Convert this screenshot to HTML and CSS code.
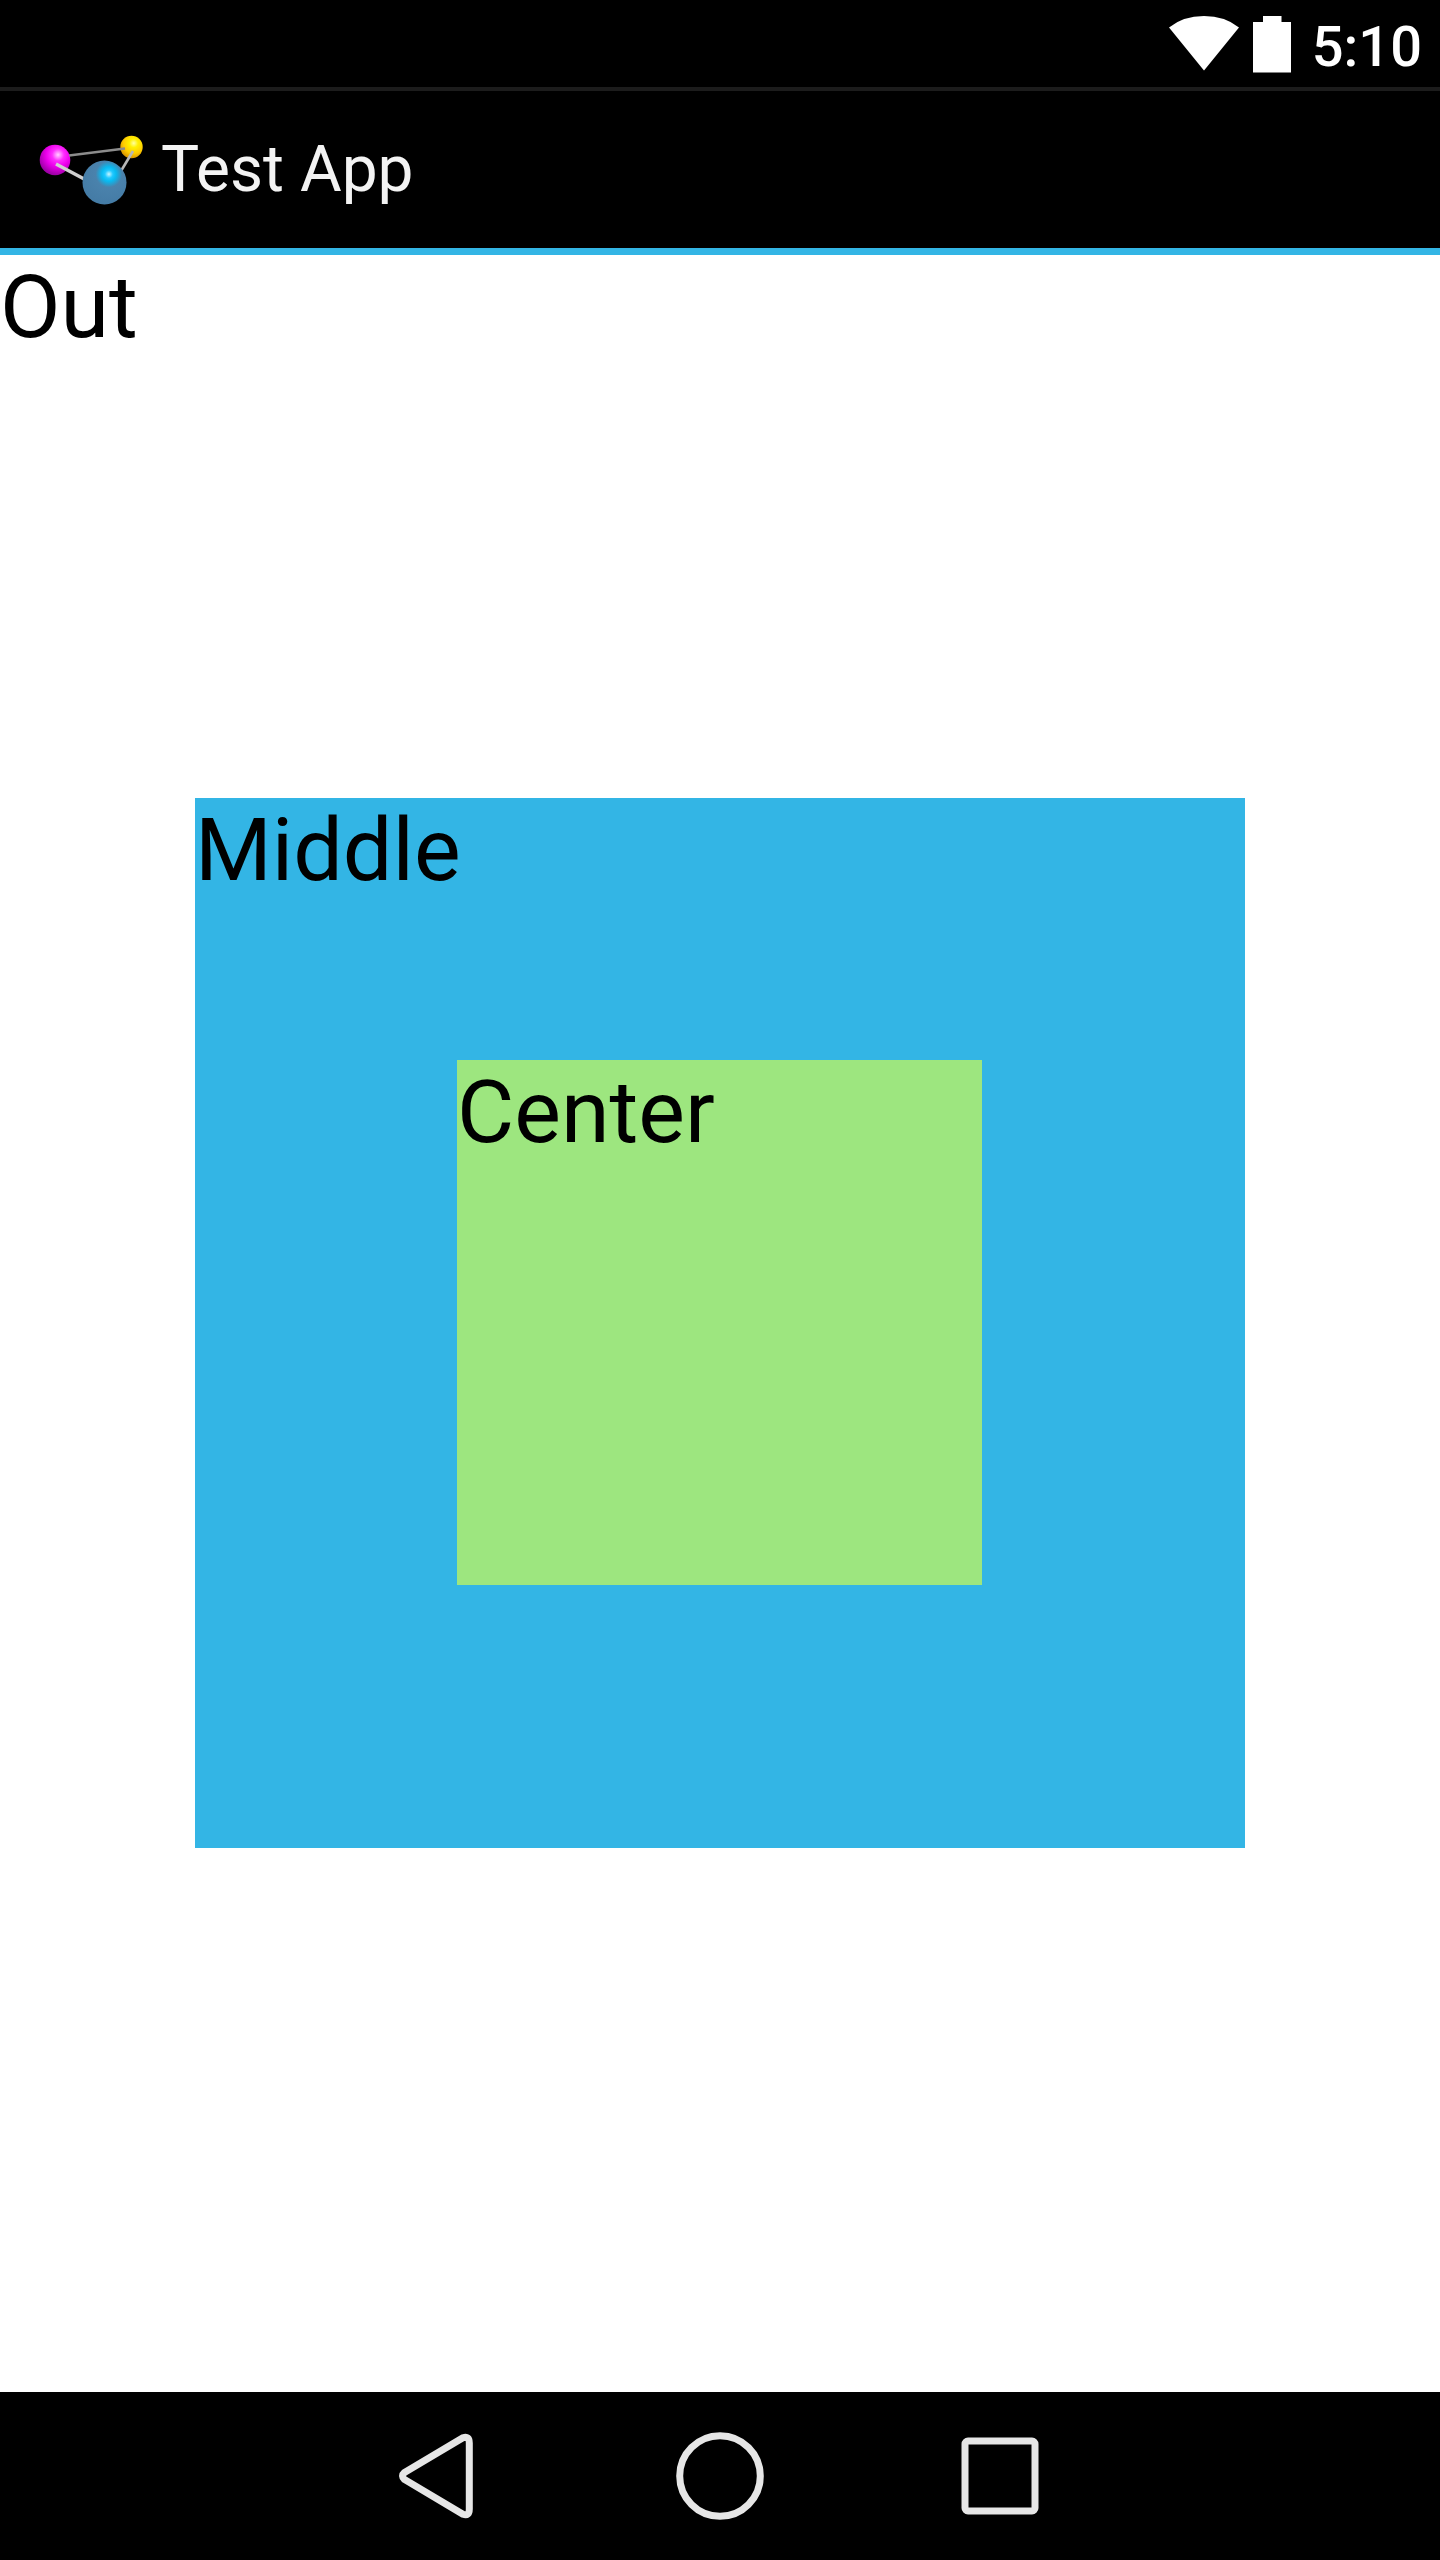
FILE: index.html
```html
<!DOCTYPE html>
<html lang="en">
<head>
<meta charset="utf-8">
<meta name="viewport" content="width=device-width, initial-scale=1">
<title>Test App</title>
<link rel="stylesheet" href="styles.css">
</head>
<body>
<div class="screen">
  <div class="status-bar">
    <svg class="wifi-icon" viewBox="0 0 70 64" aria-hidden="true">
      <path d="M0 12.500Q14 1 35 1T70 12.500L35 55.500Z" fill="#fff"/>
    </svg>
    <svg class="battery-icon" viewBox="0 0 38 64" aria-hidden="true">
      <path d="M10 1H28.500V7H38V57.500H0V7H10Z" fill="#fff"/>
    </svg>
    <time class="clock">5:10</time>
  </div>
  <header class="action-bar">
    <svg class="app-icon" viewBox="0 0 112 112" aria-hidden="true">
      <defs>
        <radialGradient id="magenta" cx="0.6" cy="0.33" r="0.65">
          <stop offset="0" stop-color="#ffd0ff"/>
          <stop offset="0.3" stop-color="#ff2cff"/>
          <stop offset="0.6" stop-color="#ec00ec"/>
          <stop offset="1" stop-color="#a000a8"/>
        </radialGradient>
        <radialGradient id="yellow" cx="0.6" cy="0.33" r="0.65">
          <stop offset="0" stop-color="#ffffa0"/>
          <stop offset="0.3" stop-color="#fff000"/>
          <stop offset="0.7" stop-color="#ffcc00"/>
          <stop offset="1" stop-color="#dd9c00"/>
        </radialGradient>
        <radialGradient id="blue" cx="0.6" cy="0.31" r="0.65">
          <stop offset="0" stop-color="#c8f6ff"/>
          <stop offset="0.14" stop-color="#20c8ff"/>
          <stop offset="0.25" stop-color="#08baf0"/>
          <stop offset="0.46" stop-color="#4a82ac"/>
          <stop offset="1" stop-color="#457ca6"/>
        </radialGradient>
      </defs>
      <circle cx="19" cy="46" r="15.300" fill="url(#magenta)"/>
      <circle cx="95.500" cy="33" r="11.200" fill="url(#yellow)"/>
      <path d="M33 41.500L89 34.500" stroke="#8c8c8c" stroke-width="2.400"/>
      <path d="M97 37L82 62" stroke="#b8b8b8" stroke-width="2.600"/>
      <path d="M20 50L50 66" stroke="#d0d0d0" stroke-width="3.400"/>
      <circle cx="68.500" cy="68.500" r="22" fill="url(#blue)"/>
    </svg>
    <h1 class="title">Test App</h1>
  </header>
  <main class="outer">
    <span class="label outer-label">Out</span>
    <section class="middle">
      <span class="label">Middle</span>
      <div class="center">
        <span class="label">Center</span>
      </div>
    </section>
  </main>
  <nav class="nav-bar">
    <button class="nav-button" type="button" aria-label="Back">
      <svg class="nav-icon" viewBox="0 0 96 96" aria-hidden="true">
        <path d="M12.500 44.500L71 9.800Q77.300 7.500 77.300 15V81Q77.300 88.500 71 86.200L12.500 51.500Q8.500 48 12.500 44.500Z"/>
      </svg>
    </button>
    <button class="nav-button" type="button" aria-label="Home">
      <svg class="nav-icon" viewBox="0 0 96 96" aria-hidden="true">
        <circle cx="48" cy="48" r="40.300"/>
      </svg>
    </button>
    <button class="nav-button" type="button" aria-label="Recent apps">
      <svg class="nav-icon" viewBox="0 0 96 96" aria-hidden="true">
        <rect x="13" y="13" width="70" height="70" rx="3"/>
      </svg>
    </button>
  </nav>
</div>
</body>
</html>
```
FILE: styles.css
```css
*,
*::before,
*::after {
  box-sizing: border-box;
}

body {
  margin: 0;
  background: #fff;
  font-family: Roboto, sans-serif;
}

.screen {
  display: flex;
  flex-direction: column;
  min-height: 100vh;
}

.status-bar {
  display: flex;
  align-items: center;
  justify-content: flex-end;
  padding: 14px 18px 7px;
  background: #000;
  color: #fff;
}

.wifi-icon {
  width: 70px;
  height: 64px;
  margin-right: 14px;
}

.battery-icon {
  width: 38px;
  height: 64px;
  margin-right: 21px;
}

.clock {
  font-size: 56px;
  font-weight: 500;
  line-height: 66px;
}

.action-bar {
  display: flex;
  align-items: center;
  gap: 13px;
  height: 168px;
  padding: 0 36px;
  border-top: 4px solid #1c1c1c;
  border-bottom: 7px solid #33b5e5;
  background: #000;
  color: #f3f3f3;
}

.app-icon {
  width: 112px;
  height: 112px;
}

.title {
  margin: 0;
  font-size: 64px;
  font-weight: 400;
  line-height: 76px;
}

.outer {
  display: grid;
  flex: 1;
  padding-bottom: 1px;
  background: #fff;
}

.outer > * {
  grid-area: 1 / 1;
}

.outer-label {
  place-self: start;
}

.label {
  color: #000;
  font-size: 88px;
  line-height: 103px;
}

.middle,
.center {
  display: grid;
  aspect-ratio: 1;
}

.middle > * {
  grid-area: 1 / 1;
}

.middle {
  place-self: center;
  width: 1050px;
  max-width: 100%;
  padding: 0 1px 1px 0;
  background: #33b5e5;
}

.center {
  place-self: center;
  width: 525px;
  max-width: 100%;
  background: #9de67f;
}

.nav-bar {
  display: flex;
  justify-content: center;
  height: 168px;
  background: #000;
}

.nav-button {
  display: flex;
  flex: 0 1 280px;
  align-items: center;
  justify-content: center;
  padding: 0;
  border: 0;
  background: none;
}

.nav-icon {
  width: 96px;
  height: 96px;
  fill: none;
  stroke: #e6e6e6;
  stroke-width: 7px;
}
```
